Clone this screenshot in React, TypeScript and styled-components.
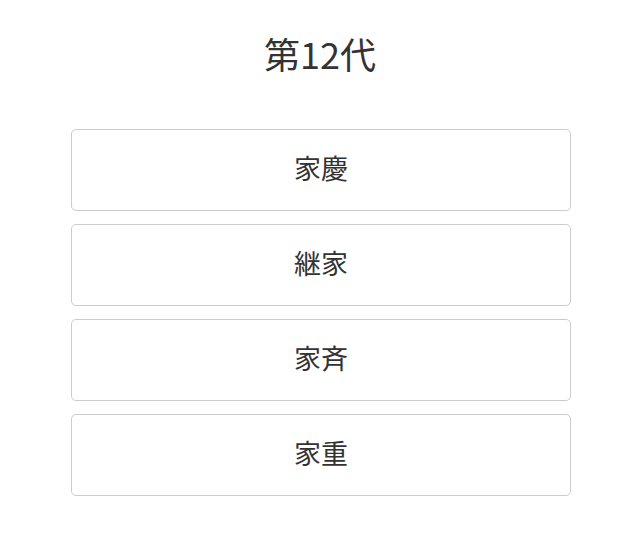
import React from "react";
import styled, { createGlobalStyle } from "styled-components";

const Global = createGlobalStyle`
  html, body { margin: 0; padding: 0; background: #fff; }
  body { font-family: "Noto Sans CJK JP", "Noto Sans", sans-serif; color: #333; }
`;

const Page = styled.div`
  display: flex;
  flex-direction: column;
  align-items: center;
  padding-top: 26px;
`;

const Title = styled.h1`
  margin: 0;
  font-size: 36px;
  font-weight: 400;
  line-height: 54px;
  color: #333;
`;

const List = styled.div`
  margin-top: 49px;
  width: 500px;
  display: flex;
  flex-direction: column;
  gap: 13px;
  margin-left: 2px;
`;

const Choice = styled.button`
  height: 82px;
  border: 1px solid #ccc;
  border-radius: 5px;
  background: #fff;
  font-family: "Noto Sans CJK JP", sans-serif;
  font-size: 27px;
  line-height: 1;
  color: #333;
  cursor: pointer;
  padding: 0 0 6px;
`;

const options = ["家慶", "継家", "家斉", "家重"];

export default function App() {
  return (
    <>
      <Global />
      <Page>
        <Title>第12代</Title>
        <List>
          {options.map((o) => (
            <Choice key={o}>{o}</Choice>
          ))}
        </List>
      </Page>
    </>
  );
}
